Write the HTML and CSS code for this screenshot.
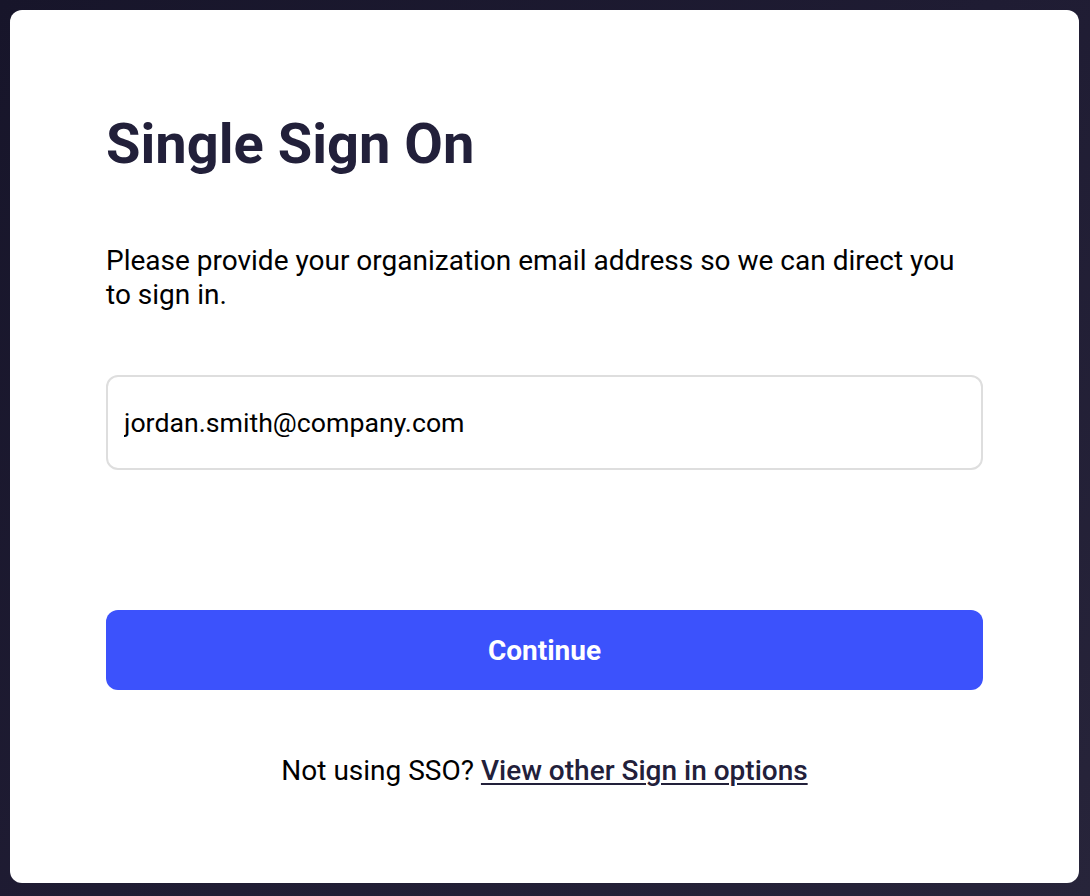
FILE: index.html
```html
<!DOCTYPE html>
<html lang="en">
<head>
<meta charset="utf-8">
<title>Single Sign On</title>
<link rel="stylesheet" href="styles.css">
</head>
<body>
<main class="card">
  <h1 class="title">Single Sign On</h1>
  <p class="intro">Please provide your organization email address so we can direct you to sign in.</p>
  <div class="field">
    <input class="email" type="email" value="jordan.smith@company.com" aria-label="Email address">
  </div>
  <button class="continue" type="button">Continue</button>
  <p class="alt">Not using SSO? <a class="alt-link" href="#">View other Sign in options</a></p>
</main>
</body>
</html>
```
FILE: styles.css
```css
html, body {
  margin: 0;
  height: 100%;
}
body {
  background: linear-gradient(135deg, #17152a 0%, #1f1c33 50%, #27243a 100%);
  font-family: Roboto, "Liberation Sans", Arial, sans-serif;
  padding: 10px 11px 13px 10px;
  box-sizing: border-box;
}
.card {
  background: #ffffff;
  border-radius: 12px;
  height: 100%;
  box-sizing: border-box;
  padding: 101px 96px 0 96px;
  display: flex;
  flex-direction: column;
}
.title {
  margin: 0;
  font-size: 56px;
  font-weight: 700;
  line-height: 66px;
  color: #22203a;
}
.intro {
  margin: 67px 0 0 0;
  font-size: 28px;
  line-height: 34px;
  color: #000000;
}
.field {
  margin-top: 63px;
}
.email {
  display: block;
  width: 100%;
  box-sizing: border-box;
  height: 95px;
  border: 2px solid #dedede;
  border-radius: 12px;
  padding: 0 16px;
  font-family: inherit;
  font-size: 26.7px;
  color: #000000;
  background: #fff;
  outline: none;
}
.continue {
  margin-top: 140px;
  height: 80px;
  border: none;
  border-radius: 12px;
  background: #3c52fc;
  color: #ffffff;
  font-family: inherit;
  font-size: 28px;
  font-weight: 700;
  cursor: pointer;
}
.alt {
  margin: 66px 0 0 0;
  text-align: center;
  font-size: 28px;
  line-height: 30px;
  color: #000000;
}
.alt-link {
  color: #22203a;
  font-weight: 500;
  text-decoration: underline;
  text-decoration-thickness: 2px;
  text-underline-offset: 3px;
}
```
